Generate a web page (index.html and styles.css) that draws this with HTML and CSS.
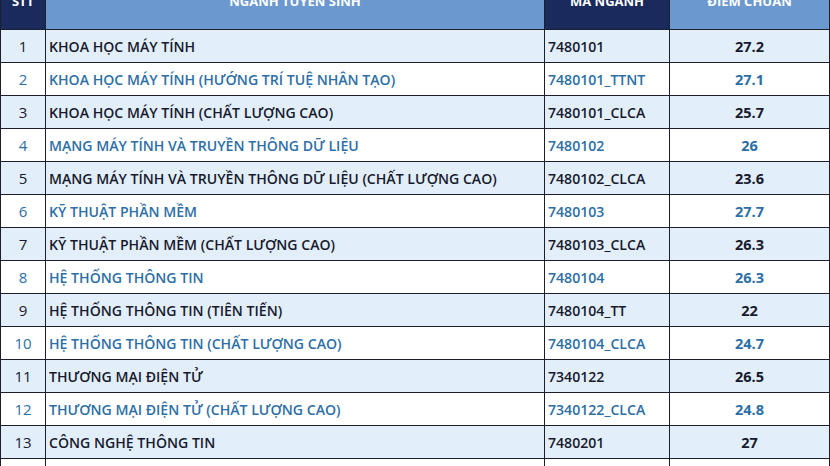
FILE: index.html
```html
<!DOCTYPE html>
<html lang="vi">
<head>
<meta charset="utf-8">
<link rel="stylesheet" href="styles.css">
</head>
<body>
<table class="tbl">
  <colgroup>
    <col class="c-stt"><col class="c-name"><col class="c-code"><col class="c-score">
  </colgroup>
  <thead>
    <tr>
      <th class="dark">STT</th>
      <th class="light">NGÀNH TUYỂN SINH</th>
      <th class="dark">MÃ NGÀNH</th>
      <th class="light">ĐIỂM CHUẨN</th>
    </tr>
  </thead>
  <tbody>
    <tr class="odd"><td class="stt">1</td><td>KHOA HỌC MÁY TÍNH</td><td>7480101</td><td class="score">27.2</td></tr>
    <tr class="even"><td class="stt">2</td><td>KHOA HỌC MÁY TÍNH (HƯỚNG TRÍ TUỆ NHÂN TẠO)</td><td>7480101_TTNT</td><td class="score">27.1</td></tr>
    <tr class="odd"><td class="stt">3</td><td>KHOA HỌC MÁY TÍNH (CHẤT LƯỢNG CAO)</td><td>7480101_CLCA</td><td class="score">25.7</td></tr>
    <tr class="even"><td class="stt">4</td><td>MẠNG MÁY TÍNH VÀ TRUYỀN THÔNG DỮ LIỆU</td><td>7480102</td><td class="score">26</td></tr>
    <tr class="odd"><td class="stt">5</td><td>MẠNG MÁY TÍNH VÀ TRUYỀN THÔNG DỮ LIỆU (CHẤT LƯỢNG CAO)</td><td>7480102_CLCA</td><td class="score">23.6</td></tr>
    <tr class="even"><td class="stt">6</td><td>KỸ THUẬT PHẦN MỀM</td><td>7480103</td><td class="score">27.7</td></tr>
    <tr class="odd"><td class="stt">7</td><td>KỸ THUẬT PHẦN MỀM (CHẤT LƯỢNG CAO)</td><td>7480103_CLCA</td><td class="score">26.3</td></tr>
    <tr class="even"><td class="stt">8</td><td>HỆ THỐNG THÔNG TIN</td><td>7480104</td><td class="score">26.3</td></tr>
    <tr class="odd"><td class="stt">9</td><td>HỆ THỐNG THÔNG TIN (TIÊN TIẾN)</td><td>7480104_TT</td><td class="score">22</td></tr>
    <tr class="even"><td class="stt">10</td><td>HỆ THỐNG THÔNG TIN (CHẤT LƯỢNG CAO)</td><td>7480104_CLCA</td><td class="score">24.7</td></tr>
    <tr class="odd"><td class="stt">11</td><td>THƯƠNG MẠI ĐIỆN TỬ</td><td>7340122</td><td class="score">26.5</td></tr>
    <tr class="even"><td class="stt">12</td><td>THƯƠNG MẠI ĐIỆN TỬ (CHẤT LƯỢNG CAO)</td><td>7340122_CLCA</td><td class="score">24.8</td></tr>
    <tr class="odd"><td class="stt">13</td><td>CÔNG NGHỆ THÔNG TIN</td><td>7480201</td><td class="score">27</td></tr>
    <tr class="even"><td class="stt">14</td><td>CÔNG NGHỆ THÔNG TIN (CHẤT LƯỢNG CAO)</td><td>7480201_CLCA</td><td class="score">26.6</td></tr>
  </tbody>
</table>
</body>
</html>
```

FILE: styles.css
```css
html, body {
  margin: 0;
  padding: 0;
  background: #ffffff;
  overflow: hidden;
}
body {
  font-family: "Open Sans", "Liberation Sans", sans-serif;
  width: 830px;
  height: 466px;
}
.tbl {
  border-collapse: collapse;
  table-layout: fixed;
  width: 829px;
  margin-top: -28px;
}
.c-stt { width: 45px; }
.c-name { width: 499px; }
.c-code { width: 125px; }
.c-score { width: 160px; }
th {
  height: 56px;
  padding: 0;
  color: #ffffff;
  font-weight: 700;
  font-size: 13px;
  text-align: center;
  vertical-align: middle;
  border: 1.5px solid #1c1f2e;
}
th.dark { background: #1a2a5c; }
th.light { background: #6b98cf; }
td {
  height: 32px;
  padding: 0 0 0 3px;
  border: 1.5px solid #1c1f2e;
  font-size: 14.1px;
  font-weight: 600;
  white-space: nowrap;
  vertical-align: middle;
}
td.stt {
  text-align: center;
  padding: 0;
  font-weight: 500;
  font-size: 15px;
}
td.score {
  text-align: center;
  padding: 0;
  font-weight: 700;
  font-size: 14.5px;
}
tr.odd { background: #e3eefb; color: #161a2c; }
tr.even { background: #ffffff; color: #2c6ea6; }
```
